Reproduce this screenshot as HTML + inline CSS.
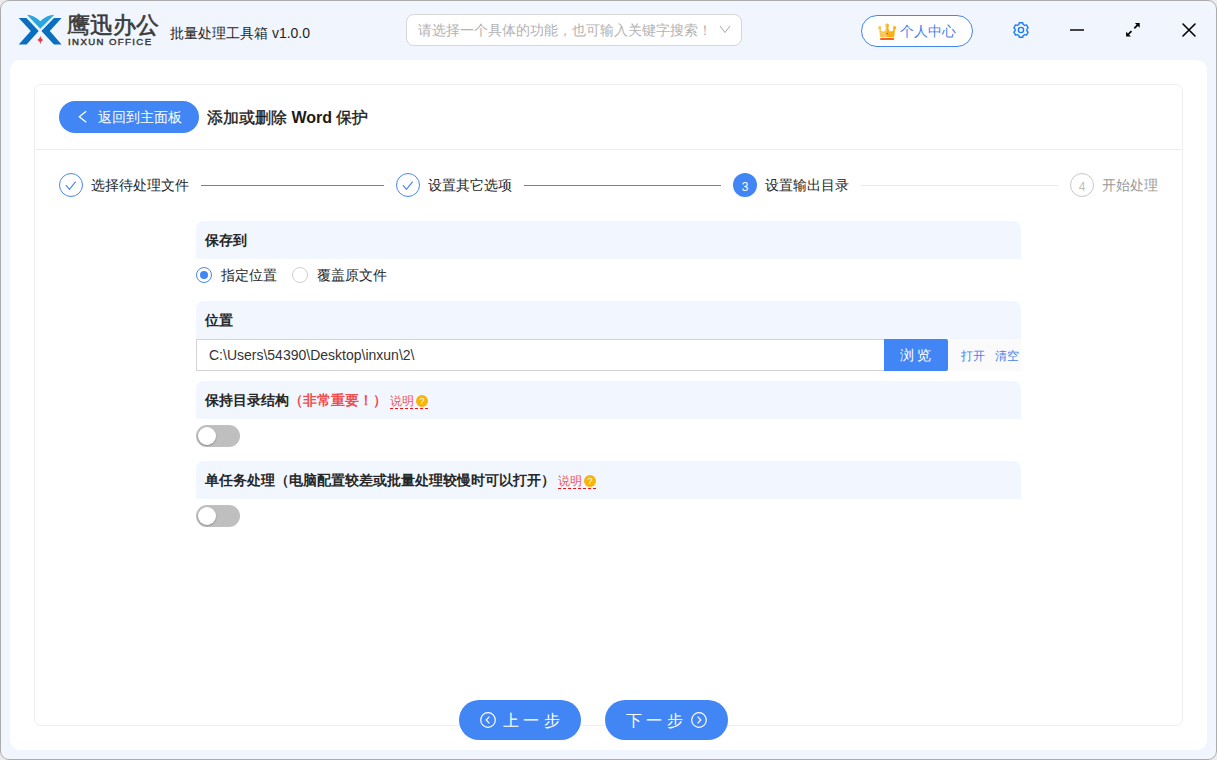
<!DOCTYPE html>
<html><head><meta charset="utf-8">
<style>
*{box-sizing:border-box;margin:0;padding:0}
html,body{width:1217px;height:760px;overflow:hidden;background:#ebebeb}
body{font-family:"Liberation Sans",sans-serif;color:#222;position:relative}
.abs{position:absolute}
#win{position:absolute;left:0;top:0;width:1217px;height:760px;border-radius:9px;background:#f1f5fd;overflow:hidden}
#frame{position:absolute;left:0;top:0;width:1217px;height:760px;border:1px solid #acacac;border-radius:9px;pointer-events:none}
#panel{position:absolute;left:10px;top:60px;width:1197px;height:690px;background:#fff;border-radius:10px}
#card{position:absolute;left:34px;top:84px;width:1149px;height:642px;border:1px solid #eeeeee;border-radius:7px;background:#fff}
.t14{font-size:14px;line-height:16px;white-space:nowrap}
.search{left:406px;top:14px;width:336px;height:32px;border:1px solid #d6d6d6;border-radius:8px;background:#fff}
.vip{left:861px;top:15px;width:112px;height:32px;border:1px solid #4286f5;border-radius:16px;background:#fff}
.btnblue{background:#4286f5;color:#fff}
.step-circle{width:24px;height:24px;border-radius:50%;border:1px solid #4a86f0}
.sechead{left:196px;width:825px;height:38px;background:#f2f6fe;border-radius:8px 8px 0 0}
.bold{font-weight:bold}
.toggle{left:196px;width:44px;height:22px;border-radius:11px;background:#bfbfbf}
.knob{left:2px;top:2px;width:18px;height:18px;border-radius:50%;background:#fff;box-shadow:0 1px 2px rgba(0,0,0,.25)}
</style></head><body>
<div id="win">
  <!-- logo -->
  <svg class="abs" style="left:14px;top:10px" width="52" height="40" viewBox="14 10 52 40">
    <polygon fill="#0b6fc1" points="18.7,17.9 26.4,17.9 38.7,31 26.6,44.5 18.7,44.5 30.8,31"/>
    <polygon fill="#0b6fc1" points="61.6,17.9 54,17.9 41.4,31 54,44.5 61.6,44.5 49.8,31"/>
    <path fill="#2aa6df" d="M26.9 14.7 Q34 15 40.3 21.3 Q46.6 15 54.3 14.7 L40.3 28.7 Z"/>
    <path fill="#f2333a" d="M40.3 35.8 Q40.9 39.4 43.5 40 Q40.9 40.6 40.3 44.2 Q39.7 40.6 37.1 40 Q39.7 39.4 40.3 35.8Z"/>
  </svg>
  <div class="abs" style="left:67px;top:12px;font-size:23px;line-height:26px;color:#3b3b3b;font-weight:normal;-webkit-text-stroke:0.6px #3b3b3b;letter-spacing:0px;white-space:nowrap">鹰迅办公</div>
  <div class="abs" style="left:68px;top:37px;font-size:9.6px;line-height:10px;color:#3b3b3b;font-weight:normal;-webkit-text-stroke:0.45px #3b3b3b;letter-spacing:1.4px;white-space:nowrap">INXUN OFFICE</div>
  <div class="abs t14" style="left:170px;top:25px;color:#1f1f1f">批量处理工具箱 v1.0.0</div>

  <!-- search -->
  <div class="abs search"></div>
  <div class="abs t14" style="left:418px;top:22px;color:#b3b3b3">请选择一个具体的功能，也可输入关键字搜索！</div>
  <svg class="abs" style="left:719px;top:25px" width="12" height="9" viewBox="0 0 12 9"><path d="M1 1 L6 7.5 L11 1" fill="none" stroke="#a6a6a6" stroke-width="1"/></svg>

  <!-- vip -->
  <div class="abs vip"></div>
  <svg class="abs" style="left:872px;top:18px" width="30" height="26" viewBox="872 18 30 26">
    <defs><clipPath id="cl"><rect x="870" y="15" width="17.1" height="30"/></clipPath><clipPath id="cr"><rect x="887.1" y="15" width="17" height="30"/></clipPath>
    <g id="crownshape"><path d="M879.1 28 L880.1 37.2 L894.1 37.2 L895.2 28 L893.8 28 Q893.4 31.6 890.8 31.6 Q888.6 31.6 888.3 26.5 L885.9 26.5 Q885.6 31.6 883.4 31.6 Q880.9 31.6 880.5 28 Z"/>
    <circle cx="879.7" cy="27.7" r="1.6"/><circle cx="887.1" cy="25.4" r="1.9"/><circle cx="894.6" cy="27.7" r="1.6"/></g></defs>
    <g clip-path="url(#cl)" fill="#f8c65a"><use href="#crownshape"/></g>
    <g clip-path="url(#cr)" fill="#fdb013"><use href="#crownshape"/></g>
    <rect x="880" y="37.9" width="14.2" height="2.2" rx="1" fill="#f2661b"/>
    <circle cx="887" cy="33.6" r="0.8" fill="#d9472b"/>
  </svg>
  <div class="abs t14" style="left:900px;top:23px;color:#4a7ff0">个人中心</div>

  <!-- gear -->
  <svg class="abs" style="left:1012px;top:21px" width="18" height="18" viewBox="-1 -1 18 18">
    <path d="M5.80 2.50 L6.30 0.75 L9.70 0.75 L10.20 2.50 L11.66 3.34 L13.43 2.90 L15.13 5.85 L13.86 7.16 L13.86 8.84 L15.13 10.15 L13.43 13.10 L11.66 12.66 L10.20 13.50 L9.70 15.25 L6.30 15.25 L5.80 13.50 L4.34 12.66 L2.57 13.10 L0.87 10.15 L2.14 8.84 L2.14 7.16 L0.87 5.85 L2.57 2.90 L4.34 3.34Z" fill="none" stroke="#1b7ef4" stroke-width="1.4" stroke-linejoin="round"/>
    <circle cx="8" cy="8" r="2.6" fill="none" stroke="#1b7ef4" stroke-width="1.4"/>
  </svg>
  <!-- minimize -->
  <div class="abs" style="left:1070px;top:29px;width:14px;height:2px;background:#444"></div>
  <!-- maximize -->
  <svg class="abs" style="left:1120px;top:17px" width="24" height="24" viewBox="1120 17 24 24">
    <path d="M1138.2 24.4 L1134.3 28.3 M1127.6 35 L1131.5 31.1" stroke="#000" stroke-width="1.7" fill="none"/>
    <path d="M1134.9 22.9 L1139.7 22.9 L1139.7 27.7 Z" fill="#000"/>
    <path d="M1126.1 31.7 L1126.1 36.5 L1130.9 36.5 Z" fill="#000"/>
  </svg>
  <!-- close -->
  <svg class="abs" style="left:1181px;top:22px" width="16" height="16" viewBox="0 0 16 16">
    <path d="M2 2 L14 14 M14 2 L2 14" stroke="#000" stroke-width="1.6" fill="none" stroke-linecap="round"/>
  </svg>

  <div id="panel"></div>
  <div id="card"></div>

  <!-- header row -->
  <div class="abs btnblue" style="left:59px;top:101px;width:140px;height:32px;border-radius:16px"></div>
  <svg class="abs" style="left:76px;top:109px" width="14" height="16" viewBox="0 0 14 16"><path d="M10.2 2.3 L3.3 7.8 L10.2 13.3" fill="none" stroke="#fff" stroke-width="1.3"/></svg>
  <div class="abs t14" style="left:98px;top:109px;color:#fff">返回到主面板</div>
  <div class="abs" style="left:207px;top:108px;font-size:16px;line-height:20px;color:#1a1a1a;white-space:nowrap;-webkit-text-stroke:0.35px #1a1a1a">添加或删除 <b style="-webkit-text-stroke:0">Word</b> 保护</div>
  <div class="abs" style="left:35px;top:149px;width:1147px;height:1px;background:#ededed"></div>

  <!-- steps -->
  <div class="abs step-circle" style="left:59px;top:173px"></div>
  <svg class="abs" style="left:59px;top:173px" width="24" height="24" viewBox="0 0 24 24"><path d="M6.9 12.2 L10.4 16.3 L16.7 8.6" fill="none" stroke="#4a86f0" stroke-width="1.15"/></svg>
  <div class="abs t14" style="left:91px;top:177px;color:#262626">选择待处理文件</div>
  <div class="abs" style="left:201px;top:185px;width:183px;height:1px;background:#4a86f0"></div>

  <div class="abs step-circle" style="left:396px;top:173px"></div>
  <svg class="abs" style="left:396px;top:173px" width="24" height="24" viewBox="0 0 24 24"><path d="M6.9 12.2 L10.4 16.3 L16.7 8.6" fill="none" stroke="#4a86f0" stroke-width="1.15"/></svg>
  <div class="abs t14" style="left:428px;top:177px;color:#262626">设置其它选项</div>
  <div class="abs" style="left:524px;top:185px;width:197px;height:1px;background:#4a86f0"></div>

  <div class="abs" style="left:733px;top:173px;width:24px;height:24px;border-radius:50%;background:#4286f5;color:#fff;font-size:12px;line-height:24px;text-align:center;padding-top:2px">3</div>
  <div class="abs t14" style="left:765px;top:177px;color:#262626">设置输出目录</div>
  <div class="abs" style="left:861px;top:185px;width:197px;height:1px;background:#e9e9e9"></div>

  <div class="abs" style="left:1070px;top:173px;width:24px;height:24px;border-radius:50%;border:1px solid #c8c8c8;color:#bdbdbd;font-size:12px;line-height:22px;text-align:center;padding-top:2px">4</div>
  <div class="abs t14" style="left:1102px;top:177px;color:#9a9a9a">开始处理</div>

  <!-- section 1 -->
  <div class="abs sechead" style="top:221px"></div>
  <div class="abs t14 bold" style="left:205px;top:232px;color:#262626">保存到</div>
  <div class="abs" style="left:196px;top:267px;width:16px;height:16px;border-radius:50%;border:1px solid #4a86f0"></div>
  <div class="abs" style="left:200px;top:271px;width:8px;height:8px;border-radius:50%;background:#4286f5"></div>
  <div class="abs t14" style="left:221px;top:267px;color:#262626">指定位置</div>
  <div class="abs" style="left:292px;top:267px;width:16px;height:16px;border-radius:50%;border:1px solid #d0d0d0"></div>
  <div class="abs t14" style="left:317px;top:267px;color:#262626">覆盖原文件</div>

  <!-- section 2 -->
  <div class="abs sechead" style="top:301px"></div>
  <div class="abs t14 bold" style="left:205px;top:312px;color:#262626">位置</div>
  <div class="abs" style="left:196px;top:339px;width:689px;height:32px;border:1px solid #d4d4d4;background:#fff"></div>
  <div class="abs t14" style="left:209px;top:347px;color:#333">C:\Users\54390\Desktop\inxun\2\</div>
  <div class="abs" style="left:948px;top:339px;width:73px;height:32px;background:#fafafa"></div>
  <div class="abs btnblue" style="left:884px;top:339px;width:64px;height:32px;border-radius:0 2px 2px 0"></div>
  <div class="abs t14" style="left:900px;top:347px;color:#fff;letter-spacing:3px">浏览</div>
  <div class="abs" style="left:961px;top:349px;font-size:12px;line-height:14px;color:#4a7ff0;white-space:nowrap">打开</div>
  <div class="abs" style="left:995px;top:349px;font-size:12px;line-height:14px;color:#4a7ff0;white-space:nowrap">清空</div>

  <!-- section 3 -->
  <div class="abs sechead" style="top:381px"></div>
  <div class="abs t14 bold" style="left:205px;top:392px;color:#262626">保持目录结构<span style="color:#f04d4d">（非常重要！）</span></div>
  <div class="abs" style="left:390px;top:394px;font-size:12px;line-height:14px;color:#f05a5a;white-space:nowrap">说明</div>
  <svg class="abs" style="left:390px;top:407px" width="38" height="2"><line x1="0" y1="1.5" x2="38" y2="1.5" stroke="#ff1010" stroke-width="1" stroke-dasharray="3 2"/></svg>
  <div class="abs" style="left:416px;top:395px;width:12px;height:12px;border-radius:50%;background:#f5b50a;color:#fff;font-size:9px;line-height:12px;text-align:center">?</div>
  <div class="abs toggle" style="top:425px"><div class="abs knob"></div></div>

  <!-- section 4 -->
  <div class="abs sechead" style="top:461px"></div>
  <div class="abs t14 bold" style="left:205px;top:472px;color:#262626">单任务处理（电脑配置较差或批量处理较慢时可以打开）</div>
  <div class="abs" style="left:558px;top:474px;font-size:12px;line-height:14px;color:#f05a5a;white-space:nowrap">说明</div>
  <svg class="abs" style="left:558px;top:487px" width="38" height="2"><line x1="0" y1="1.5" x2="38" y2="1.5" stroke="#ff1010" stroke-width="1" stroke-dasharray="3 2"/></svg>
  <div class="abs" style="left:584px;top:475px;width:12px;height:12px;border-radius:50%;background:#f5b50a;color:#fff;font-size:9px;line-height:12px;text-align:center">?</div>
  <div class="abs toggle" style="top:505px"><div class="abs knob"></div></div>

  <!-- bottom buttons -->
  <div class="abs btnblue" style="left:459px;top:700px;width:122px;height:40px;border-radius:20px"></div>
  <svg class="abs" style="left:479px;top:711px" width="18" height="18" viewBox="0 0 18 18"><circle cx="9" cy="9" r="7.3" fill="none" stroke="#fff" stroke-width="1.2"/><path d="M10.4 5.7 L7.2 9 L10.4 12.3" fill="none" stroke="#fff" stroke-width="1.2"/></svg>
  <div class="abs" style="left:503px;top:711px;font-size:16px;line-height:20px;color:#fff;letter-spacing:4.3px;white-space:nowrap">上一步</div>
  <div class="abs btnblue" style="left:605px;top:700px;width:123px;height:40px;border-radius:20px"></div>
  <div class="abs" style="left:626px;top:711px;font-size:16px;line-height:20px;color:#fff;letter-spacing:4.3px;white-space:nowrap">下一步</div>
  <svg class="abs" style="left:690px;top:711px" width="18" height="18" viewBox="0 0 18 18"><circle cx="9" cy="9" r="7.3" fill="none" stroke="#fff" stroke-width="1.2"/><path d="M7.6 5.7 L10.8 9 L7.6 12.3" fill="none" stroke="#fff" stroke-width="1.2"/></svg>

</div>
<div id="frame"></div>
</body></html>
